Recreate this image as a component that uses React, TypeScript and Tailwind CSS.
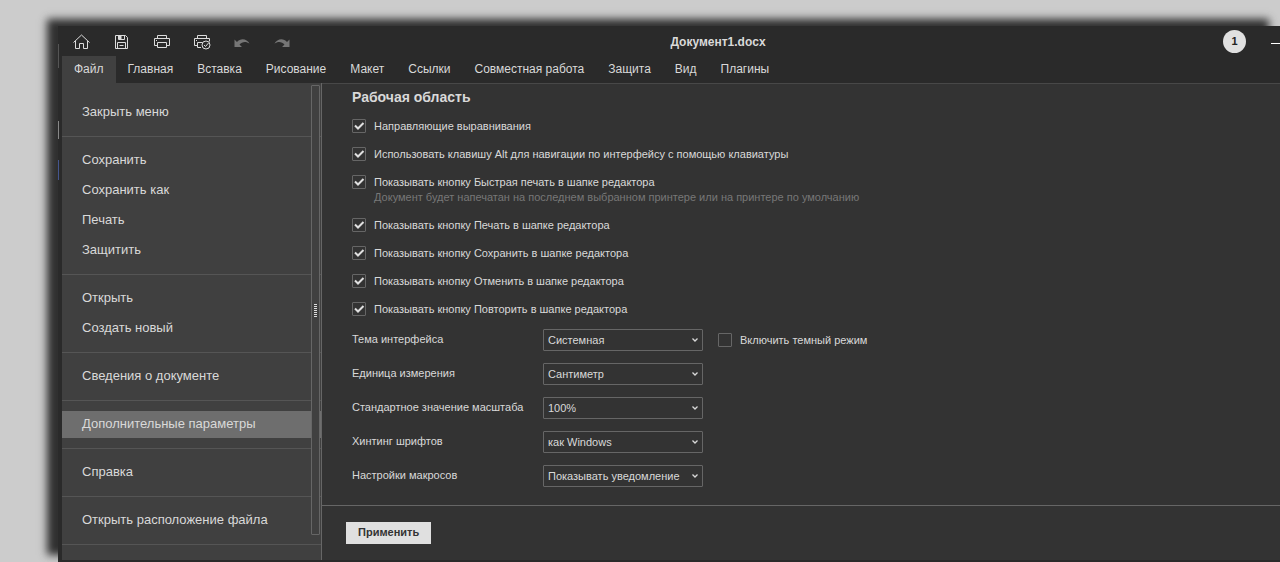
import { useState } from "react";
import type { ReactNode } from "react";

const tabs = [
  "Файл",
  "Главная",
  "Вставка",
  "Рисование",
  "Макет",
  "Ссылки",
  "Совместная работа",
  "Защита",
  "Вид",
  "Плагины",
];

const menuGroups = [
  ["Закрыть меню"],
  ["Сохранить", "Сохранить как", "Печать", "Защитить"],
  ["Открыть", "Создать новый"],
  ["Сведения о документе"],
  ["Дополнительные параметры"],
  ["Справка"],
  ["Открыть расположение файла"],
];

const workspaceOptions = [
  { id: "guides", label: "Направляющие выравнивания" },
  {
    id: "alt",
    label:
      "Использовать клавишу Alt для навигации по интерфейсу с помощью клавиатуры",
  },
  {
    id: "quick-print",
    label: "Показывать кнопку Быстрая печать в шапке редактора",
    note: "Документ будет напечатан на последнем выбранном принтере или на принтере по умолчанию",
  },
  { id: "print", label: "Показывать кнопку Печать в шапке редактора" },
  { id: "save", label: "Показывать кнопку Сохранить в шапке редактора" },
  { id: "undo", label: "Показывать кнопку Отменить в шапке редактора" },
  { id: "redo", label: "Показывать кнопку Повторить в шапке редактора" },
];

const selects = [
  { id: "theme", label: "Тема интерфейса", options: ["Системная", "Светлая", "Темная"] },
  { id: "unit", label: "Единица измерения", options: ["Сантиметр", "Пункт", "Дюйм"] },
  { id: "zoom", label: "Стандартное значение масштаба", options: ["100%", "По ширине"] },
  { id: "hinting", label: "Хинтинг шрифтов", options: ["как Windows", "как OS X"] },
  { id: "macros", label: "Настройки макросов", options: ["Показывать уведомление", "Отключить все"] },
];

function Icon({ children }: { children: ReactNode }) {
  return (
    <svg
      width="20"
      height="20"
      viewBox="0 0 20 20"
      fill="none"
      stroke="#dcdcdc"
      aria-hidden="true"
    >
      {children}
    </svg>
  );
}

const toolbar = [
  {
    name: "Главное окно",
    icon: (
      <Icon>
        <path d="M1.500 10.500 9.500 3l8 7.500M3.500 9v7.500h4v-5h4v5h4V9" />
      </Icon>
    ),
  },
  {
    name: "Сохранить",
    icon: (
      <Icon>
        <path d="M3.500 3.500h10l2 2v11h-12zM5.500 16.500v-6h8v6M6.500 3.500v4h6v-4M7.500 13.500h4" />
        <path d="M7 4h2.500v3H7z" fill="#dcdcdc" stroke="none" />
      </Icon>
    ),
  },
  {
    name: "Печать",
    icon: (
      <Icon>
        <path d="M5.500 6.500v-3h9v3M5.500 13.500h-3v-7h15v7h-3M5.500 10.500h9v5h-9z" />
        <path d="M4 8.500h1" />
      </Icon>
    ),
  },
  {
    name: "Быстрая печать",
    icon: (
      <Icon>
        <path d="M5.500 6.500v-3h9v3M5.500 13.500h-3v-7h15v3M9 15.500H5.500v-5h5" />
        <path d="M4 8.500h1" />
        <circle cx="14" cy="13" r="4" />
        <path d="m12 13 1.500 1.500 3-3.500" />
      </Icon>
    ),
  },
  {
    name: "Отменить",
    icon: (
      <Icon>
        <path
          d="M2.500 7.500V15H10l-2.500-2.500C10 9.500 14 9 17.500 11.500 15 6.500 8.500 5.500 5 10z"
          fill="#767676"
          stroke="none"
        />
      </Icon>
    ),
  },
  {
    name: "Повторить",
    icon: (
      <Icon>
        <path
          d="M17.500 7.500V15H10l2.500-2.500C10 9.500 6 9 2.500 11.500 5 6.500 11.500 5.500 15 10z"
          fill="#767676"
          stroke="none"
        />
      </Icon>
    ),
  },
];

function CheckBox({
  id,
  label,
  note,
  initial,
}: {
  id: string;
  label: string;
  note?: string;
  initial: boolean;
}) {
  const [checked, setChecked] = useState(initial);

  return (
    <div>
      <div className="flex h-7 items-center gap-2">
        <span className="relative flex size-3.5">
          <input
            id={id}
            type="checkbox"
            checked={checked}
            onChange={(e) => setChecked(e.target.checked)}
            className="size-3.5 appearance-none rounded-[1px] border border-[#666]"
          />
          {checked && (
            <svg
              className="pointer-events-none absolute inset-0"
              width="14"
              height="14"
              viewBox="0 0 14 14"
              fill="none"
              stroke="#e0e0e0"
              strokeWidth="2"
              aria-hidden="true"
            >
              <path d="m3 6.500 3 3 5.500-5.500" />
            </svg>
          )}
        </span>
        <label htmlFor={id}>{label}</label>
      </div>
      {note && <p className="-mt-[7px] h-[22px] pl-[22px] leading-4 text-[#777]">{note}</p>}
    </div>
  );
}

function SelectBox({ id, label, options }: { id: string; label: string; options: string[] }) {
  return (
    <>
      <label htmlFor={id} className="w-[191px] shrink-0 pb-0.5">
        {label}
      </label>
      <div className="relative w-40">
        <select
          id={id}
          className="block h-[22px] w-full appearance-none rounded-[1px] border border-[#666] bg-[#333] pl-1 pr-5"
        >
          {options.map((o) => (
            <option key={o}>{o}</option>
          ))}
        </select>
        <svg
          className="pointer-events-none absolute right-1 top-2"
          width="8"
          height="6"
          viewBox="0 0 8 6"
          fill="none"
          stroke="#d9d9d9"
          strokeWidth="1.3"
          aria-hidden="true"
        >
          <path d="m1.500 1.500L4 4l2.500-2.500" />
        </svg>
      </div>
    </>
  );
}

function Header() {
  return (
    <header className="pl-1">
      <div className="flex h-[30px] items-center">
        <div className="flex w-60 shrink-0 pt-0.5">
          {toolbar.map((b) => (
            <button key={b.name} type="button" aria-label={b.name} className="flex w-10 justify-center">
              {b.icon}
            </button>
          ))}
        </div>
        <h1 className="flex-1 pt-0.5 text-center text-[12px] font-bold">Документ1.docx</h1>
        <div className="flex w-[146px] shrink-0 items-center justify-end gap-[25px]">
          <span className="flex size-[23px] items-center justify-center rounded-full bg-[#e0e0e0] text-[11px] font-bold text-[#222]">
            1
          </span>
          <button type="button" aria-label="Свернуть" className="flex h-5 w-[9px] items-center pt-1">
            <span className="h-px w-full bg-white" />
          </button>
        </div>
      </div>
      <nav className="flex h-[27px]">
        {tabs.map((tab, i) => (
          <button
            key={tab}
            type="button"
            className={`px-3 pb-px text-[12px] ${i === 0 ? "bg-[#404040]" : ""}`}
          >
            {tab}
          </button>
        ))}
      </nav>
    </header>
  );
}

function Sidebar() {
  return (
    <aside className="relative w-[260px] shrink-0 border-r border-[#666] bg-[#404040] pt-1.5 text-[13px]">
      {menuGroups.map((group) => (
        <div key={group[0]} className="flex flex-col gap-[3px] border-b border-[#555] py-2.5">
          {group.map((item) => (
            <button
              key={item}
              type="button"
              className={`h-[27px] pb-0.5 pl-5 text-left ${
                item === "Дополнительные параметры" ? "bg-[#6e6e6e]" : ""
              }`}
            >
              {item}
            </button>
          ))}
        </div>
      ))}

      {/* Scroll thumb */}
      <div className="absolute bottom-[25px] right-px top-0.5 flex w-[9px] flex-col items-center justify-center gap-px rounded-[1px] border border-[#666] bg-[#404040]">
        {Array.from({ length: 7 }, (_, i) => (
          <span key={i} className="h-px w-[3px] bg-[#ddd]" />
        ))}
      </div>
    </aside>
  );
}

function Settings() {
  return (
    <main className="flex flex-1 flex-col border-t border-[#484848] bg-[#333] text-[11px]">
      <form className="flex flex-1 flex-col" onSubmit={(e) => e.preventDefault()}>
        <div className="flex-1 pb-1.5 pl-[30px] pt-[3px]">
          <h2 className="mb-[5px] text-[14px] font-bold leading-5">Рабочая область</h2>
          {workspaceOptions.map((o) => (
            <CheckBox key={o.id} {...o} initial />
          ))}
          <div className="mt-1.5">
            {selects.map((s) => (
              <div key={s.id} className="mb-3 flex h-[22px] items-center">
                <SelectBox {...s} />
                {s.id === "theme" && (
                  <div className="ml-[15px]">
                    <CheckBox id="dark-mode" label="Включить темный режим" initial={false} />
                  </div>
                )}
              </div>
            ))}
          </div>
        </div>
        <div className="border-t border-[#666] px-6 py-4">
          <button type="submit" className="block h-[22px] bg-[#e0e0e0] px-3 pb-0.5 font-bold text-[#333]">
            Применить
          </button>
        </div>
      </form>
    </main>
  );
}

export default function App() {
  return (
    <div className="flex min-h-screen overflow-hidden bg-[#ccc] pl-[58px] pt-[26px] font-['Liberation_Sans',Arial,sans-serif] text-[#d9d9d9]">
      <div className="relative flex flex-1 flex-col bg-[#2a2a2a] pb-0.5 shadow-[-11px_-7px_8px_0_#303030]">
        {/* Edges of the page behind the window */}
        <span className="absolute left-0 top-[18px] h-6 w-px bg-[#555]" />
        <span className="absolute left-0 top-[95px] h-[18px] w-px bg-[#888]" />
        <span className="absolute left-0 top-[134px] h-5 w-px bg-[#44568f]" />
        <Header />
        <div className="flex flex-1 pl-1">
          <Sidebar />
          <Settings />
        </div>
      </div>
    </div>
  );
}
